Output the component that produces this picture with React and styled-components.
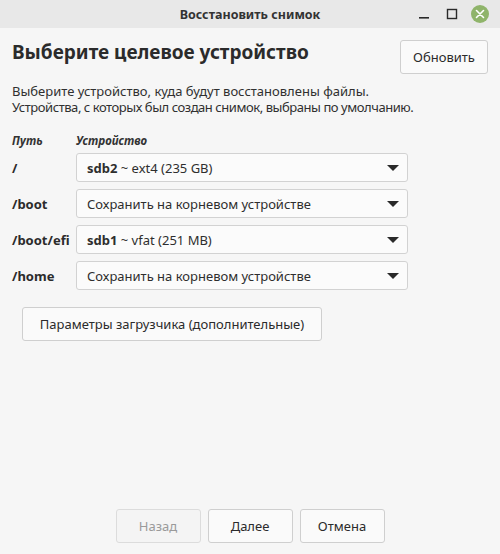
import React from "react";
import styled, { createGlobalStyle } from "styled-components";

const Global = createGlobalStyle`
  html, body { margin: 0; padding: 0; background: #f6f6f6; }
  body { font-family: "Noto Sans", "Open Sans", sans-serif; color: #303030; }
  * { box-sizing: border-box; }
`;

const Window = styled.div`
  width: 500px;
  height: 554px;
  display: flex;
  flex-direction: column;
  background: #f6f6f6;
`;

const TitleBar = styled.div`
  height: 28px;
  background: #e8e8e8;
  display: flex;
  align-items: center;
  position: relative;
  justify-content: center;
`;

const Title = styled.div`
  font-size: 12.5px;
  font-weight: 700;
  color: #333;
`;

const Controls = styled.div`
  position: absolute;
  right: 11px;
  top: 5px;
  display: flex;
  align-items: center;
  gap: 10px;
`;

const Ctl = styled.div`
  width: 18px;
  height: 18px;
  display: flex;
  align-items: center;
  justify-content: center;
  border-radius: 50%;
  background: ${(p) => (p.$close ? "#8fb46a" : "transparent")};
`;

const Body = styled.div`
  flex: 1;
  display: flex;
  flex-direction: column;
  padding: 12px 12px 11px 12px;
`;

const HeaderRow = styled.div`
  display: flex;
  justify-content: space-between;
  align-items: flex-start;
`;

const Heading = styled.h1`
  margin: 0;
  font-size: 19px;
  font-weight: 700;
  color: #2b2b2b;
  line-height: 24px;
`;

const Button = styled.button`
  font-family: inherit;
  font-size: 13px;
  color: ${(p) => (p.disabled ? "#9a9a9a" : "#2b2b2b")};
  background: ${(p) => (p.disabled ? "#f4f4f4" : "#fafafa")};
  border: 1px solid ${(p) => (p.disabled ? "#dcdcdc" : "#cfcfcf")};
  border-radius: 3px;
  height: 34px;
  width: ${(p) => p.$w || "auto"};
  padding: 0 12px;
  display: flex;
  align-items: center;
  justify-content: center;
`;

const Desc = styled.p`
  margin: 9px 0 0 0;
  font-size: 13px;
  line-height: 16px;
  color: #303030;
`;

const Line = styled.span`
  display: block;
  white-space: nowrap;
  letter-spacing: ${(p) => p.$ls || "0"};
`;

const Grid = styled.div`
  display: grid;
  grid-template-columns: 64px 332px;
  row-gap: 7px;
  margin-top: 19px;
  align-items: center;
`;

const ColHead = styled.div`
  font-size: 11.5px;
  font-weight: 700;
  font-style: italic;
  color: #333;
  line-height: 14px;
  margin-bottom: -2px;
`;

const PathLabel = styled.div`
  font-size: 13px;
  font-weight: 700;
  color: #2b2b2b;
`;

const Combo = styled.div`
  height: 29px;
  border: 1px solid #d2d2d2;
  border-radius: 3px;
  background: #fbfbfb;
  display: flex;
  align-items: center;
  justify-content: space-between;
  padding: 0 8px 0 10px;
  font-size: 13px;
  color: #2e2e2e;
`;

const Arrow = styled.span`
  width: 0;
  height: 0;
  border-left: 6px solid transparent;
  border-right: 6px solid transparent;
  border-top: 6px solid #2a2a2a;
`;

const BootRow = styled.div`
  margin-top: 17px;
  padding-left: 10px;
  display: flex;
`;

const Spacer = styled.div`
  flex: 1;
`;

const Footer = styled.div`
  display: flex;
  justify-content: center;
  gap: 7px;
`;

const rows = [
  { path: "/", bold: "sdb2", rest: " ~ ext4 (235 GB)" },
  { path: "/boot", rest: "Сохранить на корневом устройстве" },
  { path: "/boot/efi", bold: "sdb1", rest: " ~ vfat (251 MB)" },
  { path: "/home", rest: "Сохранить на корневом устройстве" },
];

export default function App() {
  return (
    <>
      <Global />
      <Window>
        <TitleBar>
          <Title>Восстановить снимок</Title>
          <Controls>
            <Ctl>
              <svg width="12" height="12" viewBox="0 0 12 12">
                <rect x="1" y="9" width="10" height="1.6" fill="#2a2a2a" />
              </svg>
            </Ctl>
            <Ctl>
              <svg width="12" height="12" viewBox="0 0 12 12">
                <rect x="1.5" y="1.5" width="9" height="9" fill="none" stroke="#2a2a2a" strokeWidth="1.4" />
              </svg>
            </Ctl>
            <Ctl $close>
              <svg width="10" height="10" viewBox="0 0 10 10">
                <path d="M1.5 1.5 L8.5 8.5 M8.5 1.5 L1.5 8.5" stroke="#fff" strokeWidth="1.6" strokeLinecap="round" />
              </svg>
            </Ctl>
          </Controls>
        </TitleBar>
        <Body>
          <HeaderRow>
            <Heading>Выберите целевое устройство</Heading>
            <Button $w="88px">Обновить</Button>
          </HeaderRow>
          <Desc>
            <Line>Выберите устройство, куда будут восстановлены файлы.</Line>
            <Line $ls="-0.45px">Устройства, с которых был создан снимок, выбраны по умолчанию.</Line>
          </Desc>
          <Grid>
            <ColHead>Путь</ColHead>
            <ColHead>Устройство</ColHead>
            {rows.map((r) => (
              <React.Fragment key={r.path}>
                <PathLabel>{r.path}</PathLabel>
                <Combo>
                  <span>
                    {r.bold && <b>{r.bold}</b>}
                    {r.rest}
                  </span>
                  <Arrow />
                </Combo>
              </React.Fragment>
            ))}
          </Grid>
          <BootRow>
            <Button $w="300px">Параметры загрузчика (дополнительные)</Button>
          </BootRow>
          <Spacer />
          <Footer>
            <Button disabled $w="85px">Назад</Button>
            <Button $w="85px">Далее</Button>
            <Button $w="85px">Отмена</Button>
          </Footer>
        </Body>
      </Window>
    </>
  );
}
